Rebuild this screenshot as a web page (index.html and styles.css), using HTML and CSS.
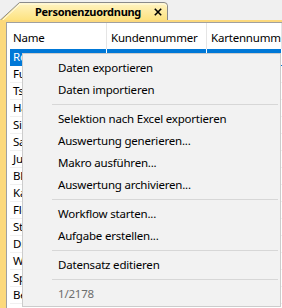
FILE: index.html
```html
<!DOCTYPE html>
<html lang="de">
<head>
<meta charset="utf-8">
<title>Personenzuordnung</title>
<link rel="stylesheet" href="styles.css">
</head>
<body>
<div class="tabstrip">
  <div class="tab">
    <svg class="tab-shape" width="168" height="20" viewBox="0 0 168 20">
      <defs>
        <linearGradient id="tabfill" x1="0" y1="0" x2="0" y2="1">
          <stop offset="0" stop-color="#fff4c4"/>
          <stop offset="1" stop-color="#fde27e"/>
        </linearGradient>
      </defs>
      <path d="M0 20.5 L19.5 2.5 H164 Q167.5 2.5 167.5 6 V20.5" fill="url(#tabfill)" stroke="#8a8a8a" stroke-width="1"/>
      <path d="M2.5 20.5 L20 4 H164 Q166.5 4 166.5 6.5" fill="none" stroke="#fffbe6" stroke-width="1"/>
    </svg>
    <div class="tab-content">
      <span class="tab-title">Personenzuordnung</span>
      <svg class="tab-close" width="8" height="8" viewBox="0 0 8 8">
        <path d="M0.8 0.8 L7.2 7.2 M7.2 0.8 L0.8 7.2" stroke="#000" stroke-width="1.6"/>
      </svg>
    </div>
  </div>
</div>
<div class="frame">
  <div class="list">
    <div class="header">
      <div class="col">Name</div>
      <div class="col">Kundennummer</div>
      <div class="col">Kartennummer</div>
    </div>
    <div class="row selected"><div class="cell">Roth</div><div class="cell"></div><div class="cell"></div></div>
    <div class="row"><div class="cell">Fuchs</div><div class="cell"></div><div class="cell"></div></div>
    <div class="row"><div class="cell">Tschopp</div><div class="cell"></div><div class="cell"></div></div>
    <div class="row"><div class="cell">Hauser</div><div class="cell"></div><div class="cell"></div></div>
    <div class="row"><div class="cell">Simon</div><div class="cell"></div><div class="cell"></div></div>
    <div class="row"><div class="cell">Sager</div><div class="cell"></div><div class="cell"></div></div>
    <div class="row"><div class="cell">Jung</div><div class="cell"></div><div class="cell"></div></div>
    <div class="row"><div class="cell">Blaser</div><div class="cell"></div><div class="cell"></div></div>
    <div class="row"><div class="cell">Kaufmann</div><div class="cell"></div><div class="cell"></div></div>
    <div class="row"><div class="cell">Fleury</div><div class="cell"></div><div class="cell"></div></div>
    <div class="row"><div class="cell">Steiner</div><div class="cell"></div><div class="cell"></div></div>
    <div class="row"><div class="cell">Dietrich</div><div class="cell"></div><div class="cell"></div></div>
    <div class="row"><div class="cell">Wyss</div><div class="cell"></div><div class="cell"></div></div>
    <div class="row"><div class="cell">Sprenger</div><div class="cell"></div><div class="cell"></div></div>
    <div class="row"><div class="cell">Berger</div><div class="cell"></div><div class="cell"></div></div>
  </div>
</div>
<div class="menu">
  <div class="item">Daten exportieren</div>
  <div class="item">Daten importieren</div>
  <div class="sep"></div>
  <div class="item">Selektion nach Excel exportieren</div>
  <div class="item">Auswertung generieren...</div>
  <div class="item">Makro ausführen...</div>
  <div class="item">Auswertung archivieren...</div>
  <div class="sep"></div>
  <div class="item">Workflow starten...</div>
  <div class="item">Aufgabe erstellen...</div>
  <div class="sep"></div>
  <div class="item">Datensatz editieren</div>
  <div class="sep"></div>
  <div class="item disabled">1/2178</div>
</div>
</body>
</html>
```
FILE: styles.css
```css
* { box-sizing: border-box; }
html, body { margin: 0; padding: 0; }
body {
  width: 282px;
  height: 308px;
  overflow: hidden;
  position: relative;
  background: #f0f0f0;
  font-family: "Noto Sans", "Open Sans", sans-serif;
  font-size: 11.5px;
  letter-spacing: -0.2px;
  color: #000;
}
.tabstrip { height: 20px; display: flex; }
.tab { width: 168px; height: 20px; display: grid; }
.tab > * { grid-area: 1 / 1; }
.tab-content {
  display: flex;
  align-items: center;
  padding-top: 3px;
}
.tab-title {
  margin-left: 35px;
  font-weight: bold;
  font-size: 11px;
  letter-spacing: -0.3px;
  line-height: 16px;
}
.tab-close { margin-left: auto; margin-right: 6px; }
.frame {
  height: 288px;
  background: #fcd97c;
  padding: 2px 0 0 6px;
}
.list {
  height: 100%;
  background: #fff;
  border-left: 1px solid #a0a0a0;
  border-top: 1px solid #a0a0a0;
  overflow: hidden;
}
.header {
  display: grid;
  grid-template-columns: 97px 100px 1fr;
  height: 26px;
  margin-left: 3px;
}
.col {
  display: flex;
  align-items: center;
  padding: 2px 0 0 4px;
  border-right: 1px solid #e5e5e5;
  white-space: nowrap;
  overflow: hidden;
}
.col:first-child { padding-left: 3px; }
.row {
  display: grid;
  grid-template-columns: 97px 100px 1fr;
  height: 17px;
  margin-left: 3px;
  border-bottom: 1px solid #f0f0f0;
}
.cell {
  padding-left: 4px;
  line-height: 16px;
  white-space: nowrap;
  overflow: hidden;
  border-right: 1px solid #fff;
}
.cell:first-child { padding-left: 3px; }
.row.selected { background: #0078d7; color: #fff; border-bottom-color: #0078d7; }
.menu {
  position: absolute;
  left: 22px;
  top: 53px;
  width: 259px;
  height: 254px;
  background: #f2f2f2;
  border: 1px solid #cccccc;
  padding: 3px 0 1px;
}
.item {
  height: 22px;
  line-height: 22px;
  padding-left: 35px;
  white-space: nowrap;
}
.item.disabled { color: #6d6d6d; }
.sep {
  height: 7px;
  display: flex;
  align-items: center;
  margin: 0 2px 0 29px;
}
.sep::after {
  content: "";
  flex: 1;
  height: 1px;
  background: #d7d7d7;
}
```
